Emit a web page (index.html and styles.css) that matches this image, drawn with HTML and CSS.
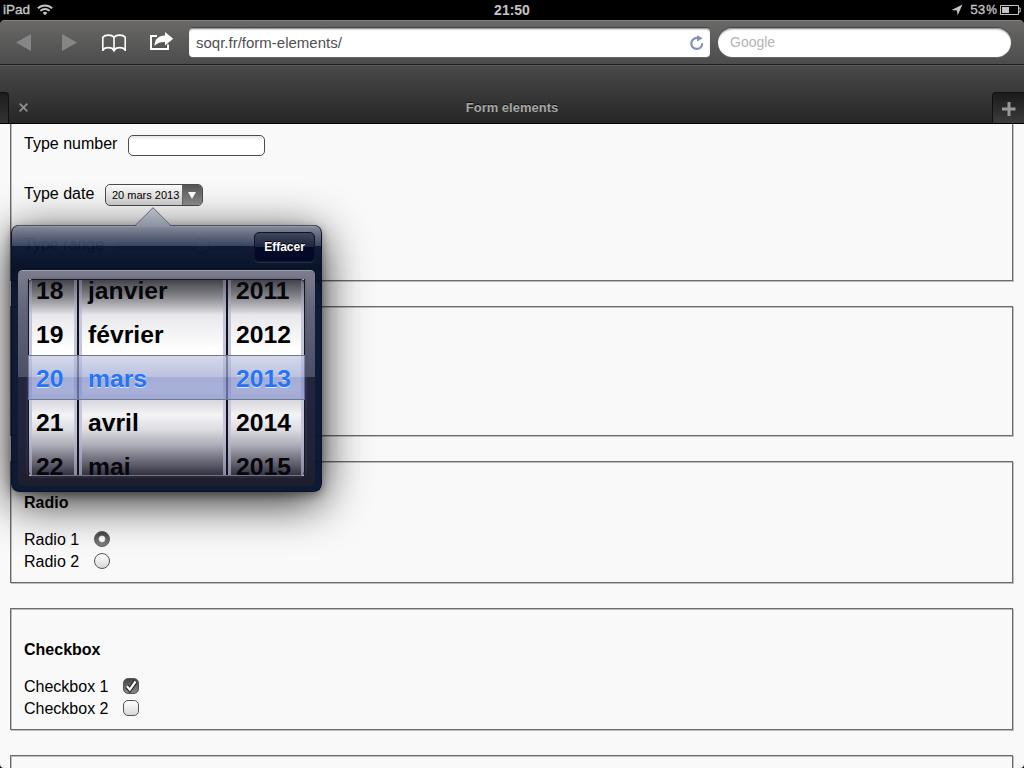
FILE: index.html
```html
<!DOCTYPE html>
<html lang="fr">
<head>
<meta charset="utf-8">
<title>Form elements</title>
<link rel="stylesheet" href="styles.css">
</head>
<body>
<div class="screen">
  <header class="status">
    <div class="status-left"><span>iPad</span>
      <svg class="wifi" width="16" height="12" viewBox="0 0 16 12" fill="none" stroke="#c4c4c4"><path d="M.9 4.3a10.2 10.2 0 0 1 14.2 0M3.4 6.9a6.600 6.600 0 0 1 9.200 0" stroke-width="2"/><path d="M8 11.200 5.600 8.900a3.500 3.500 0 0 1 4.800 0z" fill="#c4c4c4" stroke="none"/></svg>
    </div>
    <div class="status-time">21:50</div>
    <div class="status-right">
      <svg width="12" height="12" viewBox="0 0 12 12"><path d="M11.500.5 6.600 11.600 6 6.400.5 6z" fill="#c4c4c4"/></svg>
      <span class="percent">53<i>%</i></span>
      <svg class="battery" width="21" height="10" viewBox="0 0 21 10"><path d="M.5.5h18v9h-18zM18.500 3h1.700v4h-1.700" fill="none" stroke="#c4c4c4"/><path d="M2 2h7v6H2z" fill="#c4c4c4"/></svg>
    </div>
  </header>
  <nav class="toolbar">
    <svg class="tools" width="189" height="44" viewBox="0 0 189 44">
      <path d="M16 22.500 31 14v17z" fill="#868686"/>
      <path d="M77 22.500 62 14v17z" fill="#868686"/>
      <g fill="none" stroke="#fff"><path d="M102.800 31V17.200c2.200-2.800 9-2.800 11.200 0 2.200-2.800 9-2.800 11.200 0V31M114 17.200V31" stroke-width="1.600"/><path d="M102.800 30.200c1.800-3.400 9.400-3.400 11.200.3 1.800-3.700 9.400-3.700 11.200-.3" stroke-width="1.800"/></g>
      <path d="M157 16h-6v13h17v-4.500" fill="none" stroke="#fff" stroke-width="2"/>
      <path d="M154.500 26c0-6.500 3.500-10.300 10.500-10.500V12l8.200 6.800-8.200 6.800V22c-4.500-.2-8 .8-10.500 4z" fill="#fff"/>
    </svg>
    <div class="address"><span>soqr.fr/form-elements/</span>
      <svg width="14" height="16" viewBox="0 0 14 16"><path d="M9 3.400A5.500 5.500 0 1 0 12.300 8.200" fill="none" stroke="#8193b1" stroke-width="2.200"/><path d="M7 .3 12.800 3.300 7 6.500z" fill="#8193b1"/></svg>
    </div>
    <div class="search">Google</div>
  </nav>
  <div class="tabs">
    <div class="tab-prev"></div>
    <div class="tab-active">
      <svg class="tab-close" width="9" height="9" viewBox="0 0 9 9"><path d="m.7.700 7.600 7.600m0-7.600L.7 8.300" stroke="#929292" stroke-width="1.700"/></svg>
      <span>Form elements</span>
    </div>
    <div class="tab-new"><svg width="14" height="14" viewBox="0 0 14 14"><path d="M7 0v14M0 7h13.500" stroke="#9a9a9a" stroke-width="3"/></svg></div>
  </div>
  <main class="page">
    <section class="group group-inputs">
      <div class="line"><span class="lbl-number">Type number</span><span class="textfield"></span></div>
      <div class="line line-date"><span class="lbl-date">Type date</span>
        <span class="datefield"><span class="date-value">20 mars 2013</span><span class="date-arrow"><svg width="8" height="7" viewBox="0 0 8 7"><path d="M0 0h8L4 7z" fill="#fff"/></svg></span></span>
      </div>
      <div class="line line-range"><span class="lbl-range">Type range</span><span class="range"><span class="thumb"></span></span></div>
    </section>
    <section class="group group-empty"></section>
    <section class="group group-choice">
      <h2>Radio</h2>
      <div class="choice"><span>Radio 1</span><span class="radio radio-on"></span></div>
      <div class="choice"><span>Radio 2</span><span class="radio"></span></div>
    </section>
    <section class="group group-choice group-check">
      <h2>Checkbox</h2>
      <div class="choice"><span>Checkbox 1</span><span class="check check-on"><svg width="14" height="14" viewBox="1 1 14 14"><path d="m4 8.300 2.800 3.400 5.700-8.200" fill="none" stroke="#1c1c1c" stroke-width="4.200"/><path d="m4 8.300 2.800 3.400 5.700-8.200" fill="none" stroke="#fff" stroke-width="2.200"/></svg></span></div>
      <div class="choice"><span>Checkbox 2</span><span class="check"></span></div>
    </section>
    <section class="group group-last"></section>
  </main>
  <div class="popover">
    <svg class="pointer" width="38" height="20" viewBox="0 0 38 20"><defs><linearGradient id="tip" x2="0" y2="1"><stop stop-color="#b9bdc7"/><stop offset="1" stop-color="#8a90a1"/></linearGradient></defs><path d="M1.500 19 19 1.200 36.500 19V20h-35z" fill="url(#tip)"/><path d="M1.200 18.500 19 .7l17.800 17.800" fill="none" stroke="#555a66"/></svg>
    <div class="popover-bar"><span class="clear">Effacer</span></div>
    <div class="picker">
      <div class="wheel"><b>18</b><b>19</b><b class="on">20</b><b>21</b><b>22</b></div>
      <div class="wheel"><b>janvier</b><b>février</b><b class="on">mars</b><b>avril</b><b>mai</b></div>
      <div class="wheel"><b>2011</b><b>2012</b><b class="on">2013</b><b>2014</b><b>2015</b></div>
      <div class="bezel"></div>
      <div class="window"></div>
      <div class="selection"></div>
    </div>
  </div>
  <svg class="corners" width="1024" height="5" viewBox="0 0 1024 5"><path d="M0 1v4h4A4 4 0 0 1 0 1zM1024 1v4h-4a4 4 0 0 0 4-4z"/></svg>
</div>
</body>
</html>
```

FILE: styles.css
```css
* { box-sizing: border-box; }
body { margin: 0; background: #000; font-family: "Liberation Sans", Arial, sans-serif; color: #000; }
.screen { position: relative; width: 1024px; height: 768px; overflow: hidden; display: flex; flex-direction: column; background: #000; }

.status { flex: none; height: 20px; display: grid; grid-template-columns: 1fr auto 1fr; align-items: center; color: #c4c4c4; font-size: 14px; line-height: 18px; padding: 0 3px 1px; }
.status-left, .status-right { display: flex; align-items: center; }
.status-left { gap: 7px; font-size: 13.500px; -webkit-text-stroke: .4px #c4c4c4; }
.wifi { margin-top: 1px; }
.status-time { font-weight: bold; }
.status-right { justify-content: flex-end; }
.percent { margin-left: 7px; font-size: 13.500px; -webkit-text-stroke: .3px #c4c4c4; }
.percent i { font-style: normal; font-size: 12px; margin-left: 1px; }
.battery { margin-left: 3px; }

.toolbar { flex: none; height: 45px; display: flex; align-items: flex-start; border-radius: 5px 5px 0 0; border-bottom: 1px solid #202020; background: linear-gradient(#6a6967, #4c4c4c); box-shadow: inset 0 1px #80807e; }
.tools { flex: none; display: block; }
.address, .search { margin-top: 8px; height: 29px; background: #fff; font-size: 14px; box-shadow: inset 0 2px 2px -1px #777, 0 -1px #444, 0 1px #686868; display: flex; align-items: center; padding-bottom: 1px; }
.address { width: 521px; border-radius: 4px; padding: 0 6px 1px 7px; justify-content: space-between; color: #505050; font-size: 15px; }
.address svg { margin-top: 1px; }
.search { width: 293px; margin-left: 8px; border-radius: 15px; padding-left: 12px; color: #b4b4b4; }

.tabs { flex: none; height: 59px; display: flex; align-items: flex-end; background: linear-gradient(#4a4a4a, #262626); border-bottom: 1px solid #000; box-shadow: inset 0 1px #5a5a5a; }
.tab-prev { width: 9px; height: 31px; border-radius: 0 4px 0 0; background: linear-gradient(#1c1c1c, #343434); border: solid #101010; border-width: 1px 1px 0 0; }
.tab-active { flex: 1; height: 31px; display: flex; align-items: center; position: relative; justify-content: center; font-weight: bold; font-size: 13px; color: #a6a6a6; text-shadow: 0 -1px #111; }
.tab-active span { margin-left: 23px; }
.tab-close { position: absolute; left: 10px; top: 11px; }
.tab-new { width: 32px; height: 31px; border-radius: 4px 0 0 0; background: linear-gradient(#1a1a1a, #3c3c3c); border: solid #101010; border-width: 1px 0 0 1px; display: flex; align-items: center; justify-content: center; padding-top: 2px; }

.page { flex: none; height: 644px; overflow: hidden; background: #f9f9f9; padding: 0 11px 0 10px; font-size: 16px; line-height: 22px; display: flex; flex-direction: column; gap: 25px; }
.group { flex: none; border: 1px solid #6b6b6b; box-shadow: 1px 1px #bdbdbd, inset 1px 1px #bdbdbd; padding-left: 13px; }
.group-inputs { height: 157px; border-top: 0; box-shadow: 1px 1px #bdbdbd, inset 1px 0 #bdbdbd; padding-top: 9px; }
.group-empty { height: 130px; }
.group-choice { height: 122px; padding-top: 30px; }
.group-last { height: 60px; }
.line { display: flex; height: 24px; align-items: flex-start; }
.line-date { margin-top: 26px; }
.line-range { margin-top: 27px; }
.lbl-number { width: 104px; }
.lbl-date { width: 81px; }
.lbl-range { width: 91px; }
.textfield { margin-top: 2px; width: 137px; height: 21px; border: 1px solid #4c4c4c; border-radius: 5px; background: linear-gradient(#e6e6e6, #fff 4px); }
.datefield { margin-top: 1px; width: 98px; height: 22px; display: flex; border: 1px solid #4c4c4c; border-radius: 5px; overflow: hidden; background: linear-gradient(#fdfdfd, #d2d2d2); font-size: 11px; }
.date-value { flex: 1; padding-left: 6px; line-height: 21px; white-space: nowrap; }
.date-arrow { width: 20px; display: flex; align-items: center; justify-content: center; padding-right: 2px; background: linear-gradient(#555, #8f8f8f); border-left: 1px solid #666; }
.range { margin-top: 8px; width: 128px; height: 7px; background: #ccc; border: 1px solid #999; border-radius: 4px; }
.thumb { display: block; margin: -5px 0 0 78px; width: 16px; height: 16px; border: 1px solid #444; border-radius: 50%; background: #eee; }
h2 { margin: 0 0 15px; font-size: 16px; line-height: 22px; }
.choice { display: flex; align-items: center; height: 22px; }
.choice > span:first-child { width: 70px; }
.group-check .choice > span:first-child { width: 99px; }
.radio, .check { width: 16px; height: 16px; margin-top: -2px; border: 1px solid #555; background: linear-gradient(#fff, #d8d8d8); }
.radio { border-radius: 50%; }
.radio-on { background: radial-gradient(circle, #fff 0 2px, #ddd 3px, transparent 3.800px), linear-gradient(#444, #858585); }
.check { border-radius: 5px; }
.check-on { background: linear-gradient(#444, #888); }
.check-on svg { display: block; }

/* Date popover floats over the form */
.popover { position: absolute; left: 11px; top: 225px; width: 311px; height: 267px; padding: 1px 6px 0 6px; border-radius: 8px; border: 1px solid #0b1120; border-width: 0 1px 1px; background: linear-gradient(rgba(132,138,154,.96), rgba(50,61,88,.96) 21px, rgba(7,20,47,.96) 21px, rgba(2,12,34,.97) 43px, rgba(5,19,48,.96) 80px, rgba(5,19,48,.97)); box-shadow: inset 0 1px #4b505d, inset 0 2px #9399a7, 0 10px 46px rgba(0,0,0,.85), 0 3px 10px rgba(0,0,0,.35); }
.pointer { position: absolute; left: 122px; top: -18px; }
.popover-bar { height: 44px; display: flex; justify-content: flex-end; padding: 6px 0 0; }
.clear { width: 61px; height: 30px; border-radius: 5px; border: 1px solid #101424; background: linear-gradient(#40465c, #1c2340 50%, #030b29 50%, #020927); color: #fff; text-shadow: 0 -1px #000; font-weight: bold; font-size: 12px; line-height: 28px; text-align: center; box-shadow: 0 1px #26304a; }
.picker { position: relative; width: 297px; height: 216px; border-radius: 4px; overflow: hidden; display: flex; gap: 2px; padding: 0 11px; background: #111118; }
.wheel { height: 216px; border: solid #c5c5dc; border-width: 0 3px; background: linear-gradient(#555 5px, #8b8b91 15px, #e8e8ec 45px, #fff 80px, #fff 120px, #d8d8de 131px, #f4f4f6 145px, #c2c2cb 175px, #777682 195px, #35343f 208px); }
.wheel:nth-child(1) { width: 48px; padding-left: 4px; }
.wheel:nth-child(2) { width: 147px; padding-left: 6px; }
.wheel:nth-child(3) { width: 76px; padding-left: 5px; }
.wheel b { display: block; height: 44px; line-height: 44px; font-size: 24.700px; }
.wheel b:first-child { margin-top: -1px; }
.wheel .on { position: relative; z-index: 2; color: #2474f5; text-shadow: 0 1px #dfe6ff; }
.bezel { position: absolute; inset: 0; border-radius: 4px; border: solid transparent; border-width: 9px 10px 10px; background: linear-gradient(#a2a3ac 1px, #7b7d8e 1px, #62657a 40px, #4b4f66 107px, #24243e 107px, #20223a 180px, #1d1e2b) border-box; -webkit-mask: linear-gradient(#000 0 0) padding-box, linear-gradient(#000 0 0); -webkit-mask-composite: xor; mask-composite: exclude; }
.window { position: absolute; left: 10px; top: 9px; width: 277px; height: 197px; border: 1px solid #16161e; border-bottom-color: #777582; border-radius: 5px; background: linear-gradient(rgba(20,20,30,.5), transparent 35px, transparent 150px, rgba(20,18,40,.35)); box-shadow: 0 0 0 2px #55576a33; }
.selection { position: absolute; left: 10px; top: 85px; width: 277px; height: 45px; border: solid #6b7a93; border-width: 1px 0; background: linear-gradient(rgba(190,197,223,.65), rgba(158,167,211,.7) 21px, rgba(127,139,197,.7) 21px, rgba(134,146,203,.7)); }
.corners { position: absolute; left: 0; bottom: 0; }
```
